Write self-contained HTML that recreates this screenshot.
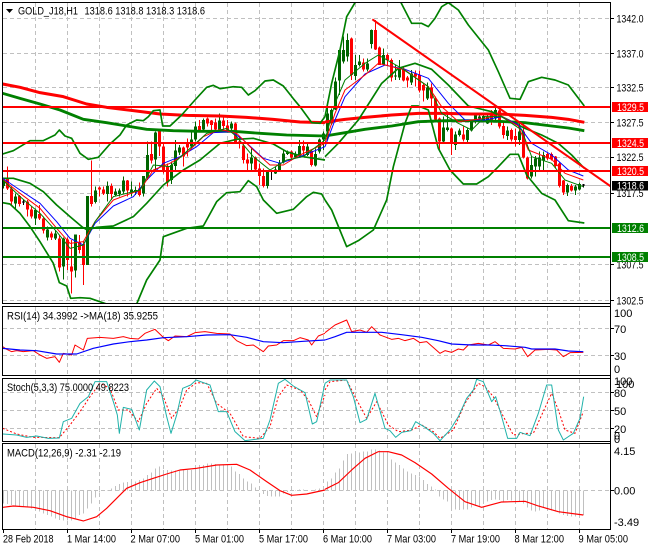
<!DOCTYPE html>
<html><head><meta charset="utf-8"><style>
html,body{margin:0;padding:0;background:#fff;width:650px;height:550px;overflow:hidden}
svg{display:block;font-family:"Liberation Sans",sans-serif}
text{font-size:11px;fill:#000}
.w{fill:#fff}
</style></head><body>
<svg width="650" height="550" viewBox="0 0 650 550" xmlns="http://www.w3.org/2000/svg">
<rect width="650" height="550" fill="#fff"/>
<defs>
<clipPath id="cm"><rect x="3" y="3" width="607" height="301"/></clipPath>
<clipPath id="cr"><rect x="3" y="307" width="607" height="69"/></clipPath>
<clipPath id="cs"><rect x="3" y="379" width="607" height="62"/></clipPath>
<clipPath id="cd"><rect x="3" y="444" width="607" height="85"/></clipPath>
</defs>
<!-- grid -->
<g stroke="#c0c0c0" stroke-width="1" stroke-dasharray="4 3" fill="none" shape-rendering="crispEdges">
<path d="M35.5 3V304M67.5 3V304M99.5 3V304M131.5 3V304M163.5 3V304M195.5 3V304M227.5 3V304M259.5 3V304M291.5 3V304M323.5 3V304M355.5 3V304M387.5 3V304M419.5 3V304M451.5 3V304M483.5 3V304M515.5 3V304M547.5 3V304M579.5 3V304"/>
<path d="M3 18.5H610M3 53.5H610M3 87.5H610M3 122.5H610M3 157.5H610M3 193.5H610M3 228.5H610M3 264.5H610M3 300.5H610"/>
<path d="M35.5 307V376M67.5 307V376M99.5 307V376M131.5 307V376M163.5 307V376M195.5 307V376M227.5 307V376M259.5 307V376M291.5 307V376M323.5 307V376M355.5 307V376M387.5 307V376M419.5 307V376M451.5 307V376M483.5 307V376M515.5 307V376M547.5 307V376M579.5 307V376"/>
<path d="M3 328.5H610M3 355.5H610"/>
<path d="M35.5 379V441M67.5 379V441M99.5 379V441M131.5 379V441M163.5 379V441M195.5 379V441M227.5 379V441M259.5 379V441M291.5 379V441M323.5 379V441M355.5 379V441M387.5 379V441M419.5 379V441M451.5 379V441M483.5 379V441M515.5 379V441M547.5 379V441M579.5 379V441"/>
<path d="M3 392.5H610M3 410.5H610M3 428.5H610"/>
<path d="M35.5 444V529M67.5 444V529M99.5 444V529M131.5 444V529M163.5 444V529M195.5 444V529M227.5 444V529M259.5 444V529M291.5 444V529M323.5 444V529M355.5 444V529M387.5 444V529M419.5 444V529M451.5 444V529M483.5 444V529M515.5 444V529M547.5 444V529M579.5 444V529"/>
<path d="M3 490.5H610"/>
</g>
<path d="M3 185.5H610" stroke="#c0c0c0" stroke-width="1" shape-rendering="crispEdges"/>

<!-- candles left -->
<g clip-path="url(#cm)">
<g transform="translate(-.17 0) scale(.33333)" fill="none" shape-rendering="crispEdges">
<path stroke="#006400" stroke-width="3" d="M11 535V565M47 580V625M107 625V675M143 680V722M167 690V720M191 712V838M227 703V832M263 588V795M287 560V610M323 545V605M347 565V590M359 565V590M371 530V580M395 545V590M407 560V585M431 528V590M443 425V540M467 395V515M515 485V552M527 420V510M539 435V465M575 390V445M587 365V425M611 355V395M659 340V395M695 365V395M755 442V515M803 510V565M827 500V522M839 480V515M851 450V490M863 452V465M887 455V475M899 420V470M923 430V468M947 445V500M959 415V460M971 395V450"/>
<path stroke="#006400" stroke-width="9" d="M11 540V558M47 590V610M107 630V655M143 688V712M167 700V715M191 715V800M227 703V812M263 588V795M287 572V606M323 558V582M347 575V585M359 572V582M371 542V575M395 568V578M407 570V576M431 528V580M443 465V535M467 397V478M515 495V540M527 452V498M539 443V458M575 418V440M587 380V418M611 360V388M659 362V388M695 370V386M755 472V490M803 515V558M827 508V520M839 488V510M851 460V488M863 458V462M887 462V472M899 438V465M923 440V465M947 462V497M959 418V455M971 400V418"/>
<path stroke="#ff0000" stroke-width="3" d="M23 500V570M35 560V615M59 585V620M83 600V650M95 620V655M119 615V660M131 650V700M155 695V720M179 705V815M203 712V810M215 720V880M239 705V760M251 725V855M275 482V620M299 560V590M311 560V585M335 550V600M383 540V590M419 548V590M455 425V490M479 388V468M491 430V520M503 490V560M551 440V500M563 415V470M599 360V395M623 352V380M635 360V390M647 355V390M671 345V390M683 360V395M707 368V432M719 410V445M731 432V490M743 460V515M767 470V510M779 490V555M791 505V562M875 452V478M911 422V470M935 450V500"/>
<path stroke="#ff0000" stroke-width="9" d="M23 535V565M35 565V605M59 588V612M83 605V628M95 628V650M119 642V655M131 655V692M155 700V712M179 715V802M203 718V780M215 800V815M239 728V750M251 732V795M275 588V612M299 562V568M311 568V580M335 558V582M383 542V572M419 565V585M455 462V482M479 392V440M491 440V510M503 500V548M551 443V470M563 430V442M599 378V390M623 355V370M635 362V375M647 368V388M671 362V378M683 376V390M707 370V430M719 425V428M731 436V480M743 478V490M767 473V508M779 505V528M791 528V558M875 455V472M911 438V452M935 453V495"/>
<path stroke="#000" stroke-width="3" d="M71 598V615M815 510V540"/>
<path stroke="#000" stroke-width="9" d="M71 605V607M815 512V514"/>
</g>
<g transform="translate(324.83 0) scale(.33333)" fill="none" shape-rendering="crispEdges">
<path stroke="#006400" stroke-width="3" d="M8 320V420M20 325V375M32 232V330M44 150V285M56 110V190M68 100V185M92 165V240M104 165V200M128 175V215M140 88V145M176 145V195M212 195V240M224 180V240M260 210V255M308 248V300M356 350V430M368 335V395M392 395V450M404 385V410M428 385V432M440 360V395M452 340V370M464 340V365M476 340V365M488 340V372M512 315V360M548 380V420M584 365V435M620 470V535M632 468V530M644 455V510M656 455V510M728 550V588M752 555V585M764 548V572"/>
<path stroke="#006400" stroke-width="9" d="M8 340V395M20 330V370M32 245V328M44 150V242M56 150V185M68 120V170M92 195V228M104 185V195M128 190V208M140 90V132M176 165V193M212 226V230M224 205V232M260 220V248M308 262V295M356 382V425M368 383V390M392 403V435M404 392V405M428 390V420M440 365V392M452 342V365M464 350V356M476 348V358M488 350V370M512 330V355M548 392V408M584 395V420M620 495V530M632 475V500M644 472V500M656 465V482M728 555V578M752 560V572M764 552V568"/>
<path stroke="#ff0000" stroke-width="3" d="M80 112V240M116 175V215M152 60V150M164 140V195M188 160V195M200 175V245M236 200V245M248 228V262M272 212V260M284 212V278M296 250V305M320 250V320M332 290V362M344 352V455M380 382V465M416 380V425M500 330V375M524 325V385M536 365V415M560 385V425M572 385V440M596 370V475M608 470V538M668 458V480M680 458V482M692 468V505M704 488V562M716 540V585M740 552V575"/>
<path stroke="#ff0000" stroke-width="9" d="M80 115V225M116 188V208M152 90V148M164 142V195M188 165V180M200 180V232M236 205V242M248 232V242M272 220V230M284 225V272M296 255V272M320 262V295M332 295V358M344 355V425M380 385V432M416 403V418M500 340V368M524 332V380M536 378V405M560 390V418M572 408V420M596 395V472M608 472V535M668 462V475M680 462V478M692 470V498M704 490V558M716 542V578M740 558V572"/>
<path stroke="#000" stroke-width="3" d="M776 552V562"/>
<path stroke="#000" stroke-width="9" d="M776 554V556"/>
</g>

<!-- moving averages and bands -->
<g transform="scale(.33333)" fill="none" stroke-linejoin="round">
<polyline stroke="#ff0000" stroke-width="9" points="8,252 60,262 120,278 190,290 260,312 320,322 400,332 480,342 560,346 660,348 740,352 820,358 900,366 975,368"/>
<polyline stroke="#008000" stroke-width="8.5" points="8,280 60,295 120,312 180,330 250,358 320,368 380,378 440,388 520,392 600,394 700,394 780,400 860,405 975,408"/>
<g stroke="#008000" stroke-width="5">
<polyline points="8,462 40,452 90,422 130,422 165,405 178,390 195,408 215,415 240,460 265,478 295,472 330,432 360,405 380,375 410,360 430,362 445,350 460,332 480,330 488,378 510,378 545,345 585,300 620,262 640,256 660,266 700,260 725,262 745,285 765,272 795,243 820,240 850,258 880,296 900,320 935,368 960,370 975,350"/>
<polyline points="8,535 40,535 90,550 130,575 170,615 210,650 248,682 262,690 290,682 340,678 400,650 440,610 490,555 550,510 600,480 660,430 710,418 760,415 820,432 860,455 910,470 975,480"/>
<polyline points="8,608 30,612 60,640 90,680 120,725 160,790 178,848 200,858 212,895 240,893 270,895 320,912"/>
<polyline points="410,912 440,840 480,780 490,710 560,685 610,678 650,605 680,578 720,575 745,542 770,560 790,600 830,640 880,628 920,590 940,577 965,582 975,600"/>
</g>
<polyline stroke="#0000ff" stroke-width="3" points="8,535 60,570 120,610 170,665 210,715 250,735 285,670 340,618 400,590 440,540 490,490 540,470 590,440 640,398 695,395 730,420 790,475 840,490 900,470 975,440"/>
<polyline stroke="#ff0000" stroke-width="3" points="8,538 60,580 120,625 170,685 210,730 250,725 285,665 340,600 420,570 460,510 510,490 560,460 610,410 660,388 710,400 760,450 810,495 850,495 900,465 975,430"/>
<polyline stroke="#008000" stroke-width="3" points="8,540 60,590 120,640 170,695 210,745 250,735 285,665 340,590 420,570 460,495 510,500 570,445 620,400 680,385 710,410 760,470 810,510 860,480 910,470 975,420"/>
</g>
<g transform="translate(325 0) scale(.33333)" fill="none" stroke-linejoin="round">
<polyline stroke="#ff0000" stroke-width="9" points="0,366 60,358 120,352 200,345 280,340 360,340 440,342 520,342 600,346 680,352 730,358 778,367"/>
<polyline stroke="#008000" stroke-width="8.5" points="0,408 60,398 120,388 200,378 280,365 360,362 440,362 520,364 600,368 680,378 730,384 778,392"/>
<g stroke="#008000" stroke-width="5">
<polyline points="0,350 20,250 45,150 65,50 90,8"/>
<polyline points="228,8 260,70 290,70 310,80 330,55 350,20 370,8 400,30 430,75 490,150 520,215 555,295 585,298 610,245 650,232 690,240 730,255 778,318"/>
<polyline points="0,470 40,430 100,360 170,250 220,205 270,190 320,208 370,255 430,318 500,335 560,365 600,385 650,405 700,430 740,465 778,505"/>
<polyline points="0,600 20,630 65,740 100,722 145,690 185,600 205,500 240,370 260,318 280,318 310,330 340,445 375,510 415,552 455,552 490,530 520,500 555,463 580,463 605,525 650,580 690,600 730,662 778,669"/>
</g>
<polyline stroke="#0000ff" stroke-width="3" points="0,440 30,360 60,290 120,222 180,195 240,208 310,235 370,310 420,360 480,360 530,350 580,375 620,430 680,465 730,510 775,528"/>
<polyline stroke="#ff0000" stroke-width="3" points="0,430 30,340 60,270 120,225 160,190 240,210 310,260 350,320 400,365 480,355 520,345 580,378 610,450 680,478 720,520 775,540"/>
<polyline stroke="#008000" stroke-width="3" points="0,420 30,310 60,240 120,190 160,165 230,205 310,260 350,340 400,370 440,390 480,350 530,350 590,390 620,470 680,490 720,540 775,560"/>
<line x1="142" y1="58" x2="857" y2="559" stroke="#ff0000" stroke-width="6"/>
</g>
<!-- horizontal levels -->
<g shape-rendering="crispEdges">
<path d="M3 107H610M3 143H610M3 171H610" stroke="#ff0000" stroke-width="2"/>
<path d="M3 228H610M3 257H610" stroke="#008000" stroke-width="2"/>
</g>
</g>

<!-- RSI -->
<g clip-path="url(#cr)"><g fill="none" stroke-linejoin="round">
<g transform="translate(0 300) scale(.33333)">
<polyline stroke="#ff0000" stroke-width="3" points="8,140 20,148 35,155 50,152 70,155 100,152 120,165 140,175 165,170 178,187 190,160 215,165 225,135 250,150 262,115 300,112 340,115 370,110 390,115 415,117 435,100 465,88 490,112 505,122 525,108 560,110 585,98 615,95 650,100 690,102 710,122 740,137 760,135 790,155 805,138 830,135 850,122 880,122 900,113 925,120 935,135 955,108 975,100"/>
<polyline stroke="#0000ff" stroke-width="3.5" points="8,145 60,150 110,152 170,162 230,162 280,145 340,132 390,125 440,120 490,113 560,110 620,105 690,104 740,112 790,125 850,128 910,124 975,120"/>
</g>
<g transform="translate(325 300) scale(.33333)">
<polyline stroke="#ff0000" stroke-width="3" points="0,98 30,75 65,60 80,95 105,90 125,97 140,80 165,105 200,118 220,115 240,122 265,115 285,128 305,125 345,160 360,152 380,157 400,147 415,150 430,135 460,130 490,135 510,125 535,145 570,147 590,142 608,170 630,150 670,148 695,150 715,170 735,158 775,157"/>
<polyline stroke="#0000ff" stroke-width="3.5" points="0,120 30,110 65,97 130,97 170,97 230,104 290,112 340,122 380,132 440,135 490,135 540,137 600,142 620,147 690,147 730,153 775,155"/>
</g></g></g>

<!-- Stoch -->
<g clip-path="url(#cs)"><g fill="none" stroke-linejoin="round">
<g transform="translate(0 300) scale(.33333)">
<polyline stroke="#ff0000" stroke-width="3" stroke-dasharray="6 6" points="8,385 50,402 100,412 178,413 210,375 240,335 270,290 300,250 330,265 355,330 385,330 415,365 440,310 470,265 490,290 515,355 540,320 560,270 590,248 620,250 650,310 690,340 730,410 780,415 810,380 835,290 860,255 900,270 925,300 950,350 975,285"/>
<polyline stroke="#20b2aa" stroke-width="3" points="8,402 50,405 80,412 110,408 145,415 178,414 190,365 215,355 240,310 265,290 285,245 320,245 340,305 352,345 358,400 370,322 395,328 418,390 440,270 463,243 480,260 500,350 513,400 530,345 548,265 572,255 588,240 630,255 655,335 680,335 705,395 735,422 790,415 810,360 835,250 855,238 880,258 915,278 937,372 950,365 975,250"/>
</g>
<g transform="translate(325 300) scale(.33333)">
<polyline stroke="#ff0000" stroke-width="3" stroke-dasharray="6 6" points="0,270 15,245 65,240 90,290 125,355 155,305 190,375 220,395 260,390 290,375 325,395 345,415 385,390 420,310 460,250 480,260 505,290 530,340 565,405 600,400 625,400 650,345 680,280 700,330 720,390 750,400 775,335"/>
<polyline stroke="#20b2aa" stroke-width="3" points="0,250 15,240 65,240 85,290 105,368 125,358 150,280 180,385 195,392 212,412 230,397 258,392 272,365 300,382 325,400 345,422 375,390 400,350 425,295 445,270 455,238 475,245 500,305 512,290 530,350 548,415 575,415 585,397 615,407 640,340 665,255 680,255 700,390 715,420 745,400 765,355 776,290"/>
</g></g></g>

<!-- MACD -->
<g clip-path="url(#cd)">
<g transform="translate(-.17 300) scale(.33333)" fill="none" shape-rendering="crispEdges">
<path stroke="#c0c0c0" stroke-width="3" d="M11 571V611M23 571V612M35 571V615M47 571V618M59 571V620M71 571V620M83 571V622M95 571V625M107 571V630M119 571V634M131 571V640M143 571V645M155 571V650M167 571V655M179 571V660M191 571V662M203 571V662M215 571V662M227 571V655M239 571V645M251 571V640M263 571V625M275 571V610M287 571V592M299 571V578M323 571V570M335 571V565M347 571V558M359 571V552M371 571V548M383 571V546M395 571V545M407 571V545M419 571V540M431 571V535M443 571V525M455 571V518M467 571V505M479 571V500M491 571V510M503 571V510M515 571V512M527 571V512M539 571V510M551 571V510M563 571V510M575 571V510M587 571V505M599 571V495M611 571V495M623 571V490M635 571V490M647 571V492M659 571V495M671 571V495M683 571V495M695 571V500M707 571V515M719 571V522M731 571V535M743 571V545M755 571V550M767 571V562M791 571V582M803 571V588M815 571V590M827 571V590M839 571V590M851 571V580M863 571V576M875 571V573M887 571V570M899 571V568M911 571V568M923 571V570M947 571V568M959 571V566M971 571V562"/>
</g>
<g transform="translate(324.83 300) scale(.33333)" fill="none" shape-rendering="crispEdges">
<path stroke="#c0c0c0" stroke-width="3" d="M8 571V545M20 571V535M32 571V518M44 571V505M56 571V482M68 571V462M80 571V460M92 571V458M104 571V458M116 571V455M128 571V455M140 571V448M152 571V448M164 571V452M176 571V458M188 571V465M200 571V478M212 571V488M224 571V495M236 571V505M248 571V515M260 571V520M272 571V525M284 571V530M296 571V540M308 571V552M320 571V560M332 571V568M344 571V590M356 571V598M368 571V605M380 571V625M392 571V628M404 571V630M416 571V628M428 571V628M440 571V622M452 571V618M464 571V618M476 571V610M488 571V605M500 571V600M512 571V598M524 571V600M536 571V605M548 571V600M560 571V602M572 571V600M584 571V605M596 571V610M608 571V622M620 571V632M632 571V635M644 571V632M656 571V622M668 571V630M680 571V632M692 571V635M704 571V640M716 571V645M728 571V648M740 571V650M752 571V650M764 571V648M776 571V645"/>
</g>
<g transform="translate(0 300) scale(.33333)" fill="none"><polyline stroke="#ff0000" stroke-width="3.5" stroke-linejoin="round" points="8,622 40,618 100,622 150,632 200,650 250,663 290,650 320,625 380,565 420,548 460,535 500,522 540,510 590,505 650,495 710,493 750,510 800,545 840,572 875,586 920,582 975,570"/></g>
<g transform="translate(325 300) scale(.33333)" fill="none"><polyline stroke="#ff0000" stroke-width="3.5" stroke-linejoin="round" points="0,568 40,548 80,510 120,475 160,455 190,455 230,465 270,488 320,522 370,565 420,605 470,622 530,606 600,604 640,618 700,635 775,645"/></g>
</g>

<!-- frames -->
<g fill="none" stroke="#000" stroke-width="1" shape-rendering="crispEdges">
<rect x="2.5" y="2.5" width="608" height="301"/>
<rect x="2.5" y="306.5" width="608" height="69"/>
<rect x="2.5" y="378.5" width="608" height="63"/>
<rect x="2.5" y="443.5" width="608" height="86"/>
<path d="M610.5 2.5V529.5"/>
<path d="M611 18.5h3M611 53.5h3M611 87.5h3M611 122.5h3M611 157.5h3M611 193.5h3M611 264.5h3M611 300.5h3M611 328.5h3M611 355.5h3M611 392.5h3M611 410.5h3M611 428.5h3M611 490.5h3"/>
<path d="M3.5 530v3M67.5 530v3M131.5 530v3M195.5 530v3M259.5 530v3M323.5 530v3M387.5 530v3M451.5 530v3M515.5 530v3M579.5 530v3"/>
</g>

<!-- title -->
<path d="M6 9h7l-3.5 4z" fill="#000"/>
<text x="18" y="14.5" textLength="60" lengthAdjust="spacingAndGlyphs">GOLD_J18,H1</text>
<text x="84.5" y="14.5" textLength="120.5" lengthAdjust="spacingAndGlyphs">1318.6 1318.8 1318.3 1318.6</text>
<text x="7" y="319.5" textLength="151" lengthAdjust="spacingAndGlyphs">RSI(14) 34.3992  -&gt;MA(18) 35.9255</text>
<text x="7" y="391" textLength="122" lengthAdjust="spacingAndGlyphs">Stoch(5,3,3) 75.0000 49.8223</text>
<text x="7" y="456.5" textLength="114" lengthAdjust="spacingAndGlyphs">MACD(12,26,9) -2.31 -2.19</text>

<!-- right axis -->
<g>
<text x="616.5" y="22.5" textLength="27" lengthAdjust="spacingAndGlyphs">1342.0</text>
<text x="616.5" y="57.5" textLength="27" lengthAdjust="spacingAndGlyphs">1337.0</text>
<text x="616.5" y="91.5" textLength="27" lengthAdjust="spacingAndGlyphs">1332.5</text>
<text x="616.5" y="126.5" textLength="27" lengthAdjust="spacingAndGlyphs">1327.5</text>
<text x="616.5" y="161" textLength="27" lengthAdjust="spacingAndGlyphs">1322.5</text>
<text x="616.5" y="197" textLength="27" lengthAdjust="spacingAndGlyphs">1317.5</text>
<text x="616.5" y="268.5" textLength="27" lengthAdjust="spacingAndGlyphs">1307.5</text>
<text x="616.5" y="304.5" textLength="27" lengthAdjust="spacingAndGlyphs">1302.5</text>
<g shape-rendering="crispEdges">
<rect x="612" y="102" width="36" height="10" fill="#ff0000"/>
<rect x="612" y="138" width="36" height="10" fill="#ff0000"/>
<rect x="612" y="166" width="36" height="10" fill="#ff0000"/>
<rect x="612" y="181" width="36" height="9.5" fill="#000"/>
<rect x="612" y="223" width="36" height="10" fill="#008000"/>
<rect x="612" y="252" width="36" height="10" fill="#008000"/>
</g>
<text class="w" x="617" y="111" textLength="27" lengthAdjust="spacingAndGlyphs">1329.5</text>
<text class="w" x="617" y="147" textLength="27" lengthAdjust="spacingAndGlyphs">1324.5</text>
<text class="w" x="617" y="175" textLength="27" lengthAdjust="spacingAndGlyphs">1320.5</text>
<text class="w" x="617" y="189.5" textLength="27" lengthAdjust="spacingAndGlyphs">1318.6</text>
<text class="w" x="617" y="232" textLength="27" lengthAdjust="spacingAndGlyphs">1312.6</text>
<text class="w" x="617" y="261" textLength="27" lengthAdjust="spacingAndGlyphs">1308.5</text>
<text x="614" y="317">100</text>
<text x="614" y="333">70</text>
<text x="614" y="360">30</text>
<text x="614" y="373">0</text>
<text x="614" y="385">100</text>
<text x="616" y="388">100</text>
<text x="614" y="397">80</text>
<text x="614" y="415">50</text>
<text x="614" y="433">20</text>
<text x="614" y="439.5">0</text>
<text x="614" y="443">0</text>
<text x="614" y="455">4.15</text>
<text x="614" y="494.5">0.00</text>
<text x="614" y="526">-3.49</text>
</g>

<!-- time axis -->
<g>
<text x="3" y="542.5" textLength="50.5" lengthAdjust="spacingAndGlyphs">28 Feb 2018</text>
<text x="67" y="542.5" textLength="49" lengthAdjust="spacingAndGlyphs">1 Mar 14:00</text>
<text x="130.5" y="542.5" textLength="49.5" lengthAdjust="spacingAndGlyphs">2 Mar 07:00</text>
<text x="195" y="542.5" textLength="49" lengthAdjust="spacingAndGlyphs">5 Mar 01:00</text>
<text x="259" y="542.5" textLength="49" lengthAdjust="spacingAndGlyphs">5 Mar 17:00</text>
<text x="323" y="542.5" textLength="49" lengthAdjust="spacingAndGlyphs">6 Mar 10:00</text>
<text x="387" y="542.5" textLength="49" lengthAdjust="spacingAndGlyphs">7 Mar 03:00</text>
<text x="451" y="542.5" textLength="49" lengthAdjust="spacingAndGlyphs">7 Mar 19:00</text>
<text x="514.5" y="542.5" textLength="49.5" lengthAdjust="spacingAndGlyphs">8 Mar 12:00</text>
<text x="578.5" y="542.5" textLength="49.5" lengthAdjust="spacingAndGlyphs">9 Mar 05:00</text>
</g>
</svg>
</body></html>
